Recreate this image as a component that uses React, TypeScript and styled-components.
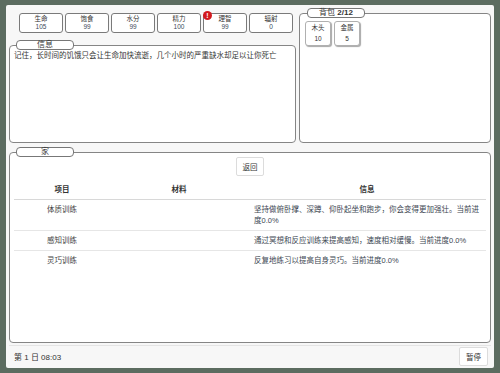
import styled, { createGlobalStyle } from 'styled-components';

const GlobalStyle = createGlobalStyle`
  html, body {
    margin: 0;
    padding: 0;
    background: #5c6c60;
  }

  body {
    font-family: 'Liberation Sans', 'Noto Sans CJK SC', sans-serif;
    color: #333;
  }

  * {
    box-sizing: border-box;
  }
`;

const Screen = styled.div`
  width: 488px;
  height: 363px;
  margin: 5px 6px;
  padding: 3px 3px 1px;
  background: #f7f7f7;
  border-radius: 2px;
  display: flex;
  flex-direction: column;
`;

const TopArea = styled.div`
  display: grid;
  grid-template-columns: 287px 192px;
  gap: 3px;
  height: 135px;
`;

const LeftColumn = styled.div`
  display: flex;
  flex-direction: column;
  min-height: 0;
`;

const StatRow = styled.div`
  display: flex;
  gap: 2px;
  margin: 5px 0 7px 10px;
`;

const StatBox = styled.div`
  position: relative;
  width: 44px;
  height: 20px;
  border: 1px solid #7a7a7a;
  border-radius: 3px;
  background: #fff;
  display: flex;
  flex-direction: column;
  align-items: center;
  justify-content: center;
  font-size: 6.5px;
  line-height: 8.5px;

  .stat__value {
    color: #3b4a58;
  }
`;

const Badge = styled.span`
  position: absolute;
  top: -3px;
  left: -1px;
  width: 9px;
  height: 9px;
  border-radius: 50%;
  background: #d3191e;
  color: #fff;
  font-size: 7px;
  font-weight: 700;
  line-height: 9px;
  text-align: center;
`;

const Panel = styled.fieldset<{ $padX?: number; $grow?: boolean }>`
  margin: 0;
  min-width: 0;
  min-height: 0;
  border: 1px solid #858585;
  border-radius: 4px;
  background: #fff;
  padding: 0 ${(p) => p.$padX ?? 4}px 4px;
  flex: ${(p) => (p.$grow ? 1 : 'none')};
`;

const PanelTitle = styled.legend`
  height: 10px;
  margin-left: 2px;
  padding: 0;
  border: 1px solid #777;
  border-radius: 4px;
  background: #fff;
  font-size: 8px;
  line-height: 8px;
  color: #333;

  .title__text {
    display: inline-block;
    width: 56px;
    text-align: center;
    vertical-align: top;
  }

  b {
    font-weight: 700;
  }
`;

const InfoText = styled.p`
  margin: 0;
  padding-top: 1px;
  font-size: 7.5px;
  line-height: 10px;
  color: #333;
`;

const BagList = styled.div`
  display: flex;
  gap: 3px;
  margin-top: 3px;
`;

const BagItem = styled.div`
  width: 26px;
  height: 25px;
  border: 1px solid #b0b0b0;
  border-radius: 3px;
  background: #fff;
  box-shadow: 1px 1px 1px rgba(0, 0, 0, 0.35);
  display: flex;
  flex-direction: column;
  align-items: center;
  justify-content: space-around;
  padding: 1px 0;
  font-size: 6.5px;
  line-height: 8px;
`;

const HomePanel = styled(Panel)`
  margin-top: 4px;
`;

const SmallButton = styled.button<{ $w: number }>`
  display: block;
  width: ${(p) => p.$w}px;
  height: 19px;
  padding: 0;
  border: 1px solid #dcdcdc;
  border-radius: 2px;
  background: #fff;
  font-family: inherit;
  font-size: 7.5px;
  color: #333;
`;

const BackButton = styled(SmallButton)`
  margin: 0 auto;
`;

const Table = styled.table`
  width: 100%;
  margin-top: 4px;
  border-collapse: collapse;
  table-layout: fixed;
  font-size: 7.5px;
  line-height: 11px;

  th {
    padding: 4px 0;
    font-weight: 700;
    text-align: center;
    color: #333;
    border-bottom: 1px solid #d8d8d8;
  }

  td {
    padding: 4px 0;
    vertical-align: top;
    color: #3d4752;
    border-bottom: 1px solid #e6e6e6;
  }

  tbody tr:last-child td {
    border-bottom: none;
  }

  td.name {
    text-align: center;
    color: #444;
  }

  td.desc {
    padding-left: 6px;
    padding-right: 3px;
  }
`;

const Footer = styled.div`
  display: flex;
  justify-content: space-between;
  align-items: center;
  height: 22px;
  margin-top: 2px;
  padding: 0 3px 0 5px;
  border-top: 1px solid #e4e4e4;
  font-size: 8px;
  color: #333;
`;

const stats = [
  { label: '生命', value: 105 },
  { label: '饱食', value: 99 },
  { label: '水分', value: 99 },
  { label: '精力', value: 100 },
  { label: '理智', value: 99, alert: true },
  { label: '辐射', value: 0 },
];

const bag = [
  { label: '木头', value: 10 },
  { label: '金属', value: 5 },
];

const trainings = [
  { name: '体质训练', info: '坚持做俯卧撑、深蹲、仰卧起坐和跑步，你会变得更加强壮。当前进度0.0%' },
  { name: '感知训练', info: '通过冥想和反应训练来提高感知，速度相对缓慢。当前进度0.0%' },
  { name: '灵巧训练', info: '反复地练习以提高自身灵巧。当前进度0.0%' },
];

const App = () => {
  return (
    <>
      <GlobalStyle />
      <Screen>
        <TopArea>
          <LeftColumn>
            <StatRow>
              {stats.map((s) => (
                <StatBox key={s.label}>
                  {s.alert && <Badge>!</Badge>}
                  <span>{s.label}</span>
                  <span className="stat__value">{s.value}</span>
                </StatBox>
              ))}
            </StatRow>

            <Panel $grow>
              <PanelTitle>
                <span className="title__text">信息</span>
              </PanelTitle>
              <InfoText>记住，长时间的饥饿只会让生命加快流逝，几个小时的严重缺水却足以让你死亡</InfoText>
            </Panel>
          </LeftColumn>

          <Panel $padX={5}>
            <PanelTitle>
              <span className="title__text">
                背包 <b>2/12</b>
              </span>
            </PanelTitle>
            <BagList>
              {bag.map((item) => (
                <BagItem key={item.label}>
                  <span>{item.label}</span>
                  <span>{item.value}</span>
                </BagItem>
              ))}
            </BagList>
          </Panel>
        </TopArea>

        <HomePanel $grow>
          <PanelTitle>
            <span className="title__text">家</span>
          </PanelTitle>
          <BackButton $w={28}>返回</BackButton>
          <Table>
            <colgroup>
              <col style={{ width: 96 }} />
              <col style={{ width: 138 }} />
              <col />
            </colgroup>
            <thead>
              <tr>
                <th>项目</th>
                <th>材料</th>
                <th>信息</th>
              </tr>
            </thead>
            <tbody>
              {trainings.map((t) => (
                <tr key={t.name}>
                  <td className="name">{t.name}</td>
                  <td />
                  <td className="desc">{t.info}</td>
                </tr>
              ))}
            </tbody>
          </Table>
        </HomePanel>

        <Footer>
          <span>第 1 日 08:03</span>
          <SmallButton $w={29}>暂停</SmallButton>
        </Footer>
      </Screen>
    </>
  );
};

export default App;
